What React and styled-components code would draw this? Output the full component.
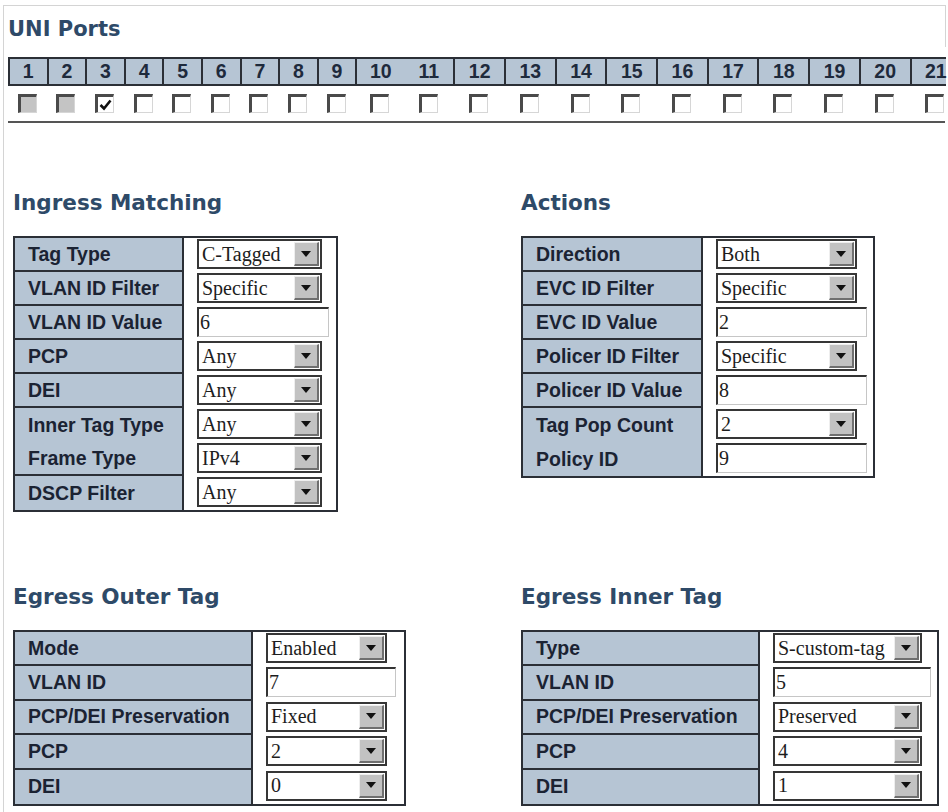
import React from "react";
import styled, { createGlobalStyle } from "styled-components";

const GlobalStyle = createGlobalStyle`
  html, body {
    margin: 0;
    padding: 0;
    background: #fff;
    overflow: hidden;
  }
  body {
    font-family: "Liberation Sans", Arial, sans-serif;
  }
`;

const DARK = "#2b2f36";
const STEEL = "#b6c5d4";

const Frame = styled.div`
  margin: 5px 0 0 3px;
  width: 943px;
  min-height: 812px;
  box-sizing: border-box;
  border-top: 1px solid #d4d4d4;
  border-left: 1px solid #d4d4d4;
`;

const TitleBar = styled.div`
  height: 41px;
  box-sizing: border-box;
  padding: 10px 0 0 4px;
  border-right: 1px solid #d4d4d4;
`;

const Title = styled.h1`
  margin: 0;
  font: bold ${(p) => p.$size || 21.5}px "DejaVu Sans", Verdana, sans-serif;
  line-height: 26px;
  color: #2e4a68;
  white-space: nowrap;
`;

const Ports = styled.div`
  margin: 10px 0 0 4px;
`;

const PortHead = styled.div`
  display: flex;
  height: 29px;
  box-sizing: border-box;
  border-top: 2px solid ${DARK};
  border-bottom: 2px solid ${DARK};
  background: ${STEEL};
`;

const PortNum = styled.div`
  flex: none;
  box-sizing: border-box;
  border-left: ${(p) => (p.$joined ? "none" : `2px solid ${DARK}`)};
  display: flex;
  align-items: center;
  justify-content: center;
  font: bold 19.5px "Liberation Sans", Arial, sans-serif;
  color: #1e2a3c;
`;

const CheckRow = styled.div`
  display: flex;
  height: 35px;
  align-items: center;
`;

const CheckCell = styled.div`
  flex: none;
  display: flex;
  justify-content: center;
`;

const Check = styled.span`
  width: 19px;
  height: 19px;
  box-sizing: border-box;
  border-style: solid;
  border-width: 3px 1px 1px 3px;
  border-color: #4a4a4a #d6d6d6 #d6d6d6 #4a4a4a;
  background: ${(p) => (p.$disabled ? "#c4c4c4" : "#fff")};
  display: flex;
  align-items: center;
  justify-content: center;
`;

const Rule = styled.div`
  margin-left: 4px;
  width: 937px;
  border-top: 2px solid #555;
`;

const Sections = styled.div`
  display: grid;
  grid-template-columns: 508px 1fr;
  align-items: start;
  row-gap: 72px;
  margin-top: 67px;
  padding-left: 9px;
`;

const Section = styled.section`
  display: flex;
  flex-direction: column;
  gap: 20px;
`;

const KeyTable = styled.div`
  width: ${(p) => p.$w}px;
  box-sizing: border-box;
  border: 2px solid ${DARK};
`;

const Row = styled.div`
  display: flex;
  height: ${(p) => p.$h}px;
`;

const Label = styled.div`
  flex: none;
  width: ${(p) => p.$w}px;
  box-sizing: border-box;
  padding-left: 13px;
  background: ${STEEL};
  border-right: 2px solid ${DARK};
  border-bottom: ${(p) => (p.$flat ? "none" : `2px solid ${DARK}`)};
  display: flex;
  align-items: center;
  font: bold 19.5px "Liberation Sans", Arial, sans-serif;
  color: #1b2333;
  white-space: nowrap;
`;

const Value = styled.div`
  flex: 1;
  display: flex;
  align-items: flex-start;
  padding: 1px 0 0 13px;
  background: #fff;
`;

const SelectBox = styled.div`
  width: ${(p) => p.$w}px;
  height: 30px;
  box-sizing: border-box;
  border: 2px solid #363636;
  background: #fff;
  display: flex;
  align-items: center;
`;

const SelectText = styled.span`
  flex: 1;
  padding-left: 3px;
  overflow: hidden;
  white-space: nowrap;
  font: 20px "Liberation Serif", "Times New Roman", serif;
  color: #1d1d1d;
`;

const Arrow = styled.span`
  flex: none;
  width: 25px;
  height: 24px;
  margin-right: 1px;
  box-sizing: border-box;
  background: #c2c2c2;
  border-style: solid;
  border-width: 1px 2px 2px 1px;
  border-color: #eeeeee #6f6f6f #6f6f6f #eeeeee;
  display: flex;
  align-items: center;
  justify-content: center;

  &::after {
    content: "";
    border-left: 5px solid transparent;
    border-right: 5px solid transparent;
    border-top: 6px solid #111;
  }
`;

const TextInput = styled.input`
  width: ${(p) => p.$w}px;
  height: 30px;
  margin: 0;
  padding: 0 0 0 1px;
  box-sizing: border-box;
  border-style: solid;
  border-width: 2px 1px 1px 2px;
  border-color: #333 #c6c6c6 #c6c6c6 #333;
  background: #fff;
  outline: none;
  font: 20px "Liberation Serif", "Times New Roman", serif;
  color: #1d1d1d;
`;

const portWidth = (n) => (n <= 9 ? 38.6 : n <= 11 ? 49 : 50.7);
const ports = Array.from({ length: 21 }, (_, i) => i + 1);

const sections = [
  {
    title: "Ingress Matching",
    w: 325,
    lw: 169,
    sw: 125,
    iw: 132,
    h: 34,
    rows: [
      ["Tag Type", "sel", "C-Tagged"],
      ["VLAN ID Filter", "sel", "Specific"],
      ["VLAN ID Value", "in", "6"],
      ["PCP", "sel", "Any"],
      ["DEI", "sel", "Any"],
      ["Inner Tag Type", "sel", "Any", true],
      ["Frame Type", "sel", "IPv4"],
      ["DSCP Filter", "sel", "Any"],
    ],
  },
  {
    title: "Actions",
    w: 354,
    lw: 180,
    sw: 141,
    iw: 151,
    h: 34,
    rows: [
      ["Direction", "sel", "Both"],
      ["EVC ID Filter", "sel", "Specific"],
      ["EVC ID Value", "in", "2"],
      ["Policer ID Filter", "sel", "Specific"],
      ["Policer ID Value", "in", "8"],
      ["Tag Pop Count", "sel", "2", true],
      ["Policy ID", "in", "9"],
    ],
  },
  {
    title: "Egress Outer Tag",
    w: 393,
    lw: 238,
    sw: 121,
    iw: 130,
    h: 34.4,
    rows: [
      ["Mode", "sel", "Enabled"],
      ["VLAN ID", "in", "7"],
      ["PCP/DEI Preservation", "sel", "Fixed"],
      ["PCP", "sel", "2"],
      ["DEI", "sel", "0"],
    ],
  },
  {
    title: "Egress Inner Tag",
    w: 418,
    lw: 237,
    sw: 149,
    iw: 158,
    h: 34.4,
    rows: [
      ["Type", "sel", "S-custom-tag"],
      ["VLAN ID", "in", "5"],
      ["PCP/DEI Preservation", "sel", "Preserved"],
      ["PCP", "sel", "4"],
      ["DEI", "sel", "1"],
    ],
  },
];

function Tick() {
  return (
    <svg width="13" height="12" viewBox="0 0 13 12">
      <path d="M1.5 6 L5 9.5 L11.5 1.5" fill="none" stroke="#111" strokeWidth="2.6" />
    </svg>
  );
}

function ConfigTable({ s }) {
  return (
    <KeyTable $w={s.w}>
      {s.rows.map(([label, kind, val, flat], i) => (
        <Row key={label + i} $h={s.h}>
          <Label $w={s.lw} $flat={flat || i === s.rows.length - 1}>
            {label}
          </Label>
          <Value>
            {kind === "sel" ? (
              <SelectBox $w={s.sw}>
                <SelectText>{val}</SelectText>
                <Arrow />
              </SelectBox>
            ) : (
              <TextInput $w={s.iw} defaultValue={val} readOnly />
            )}
          </Value>
        </Row>
      ))}
    </KeyTable>
  );
}

export default function App() {
  return (
    <>
      <GlobalStyle />
      <Frame>
        <TitleBar>
          <Title $size={21}>UNI Ports</Title>
        </TitleBar>
        <Ports>
          <PortHead>
            {ports.map((n) => (
              <PortNum key={n} $joined={n === 11} style={{ width: portWidth(n) }}>
                {n}
              </PortNum>
            ))}
          </PortHead>
          <CheckRow>
            {ports.map((n) => (
              <CheckCell key={n} style={{ width: portWidth(n) }}>
                <Check $disabled={n <= 2}>{n === 3 && <Tick />}</Check>
              </CheckCell>
            ))}
          </CheckRow>
        </Ports>
        <Rule />
        <Sections>
          {sections.map((s) => (
            <Section key={s.title}>
              <Title>{s.title}</Title>
              <ConfigTable s={s} />
            </Section>
          ))}
        </Sections>
      </Frame>
    </>
  );
}
